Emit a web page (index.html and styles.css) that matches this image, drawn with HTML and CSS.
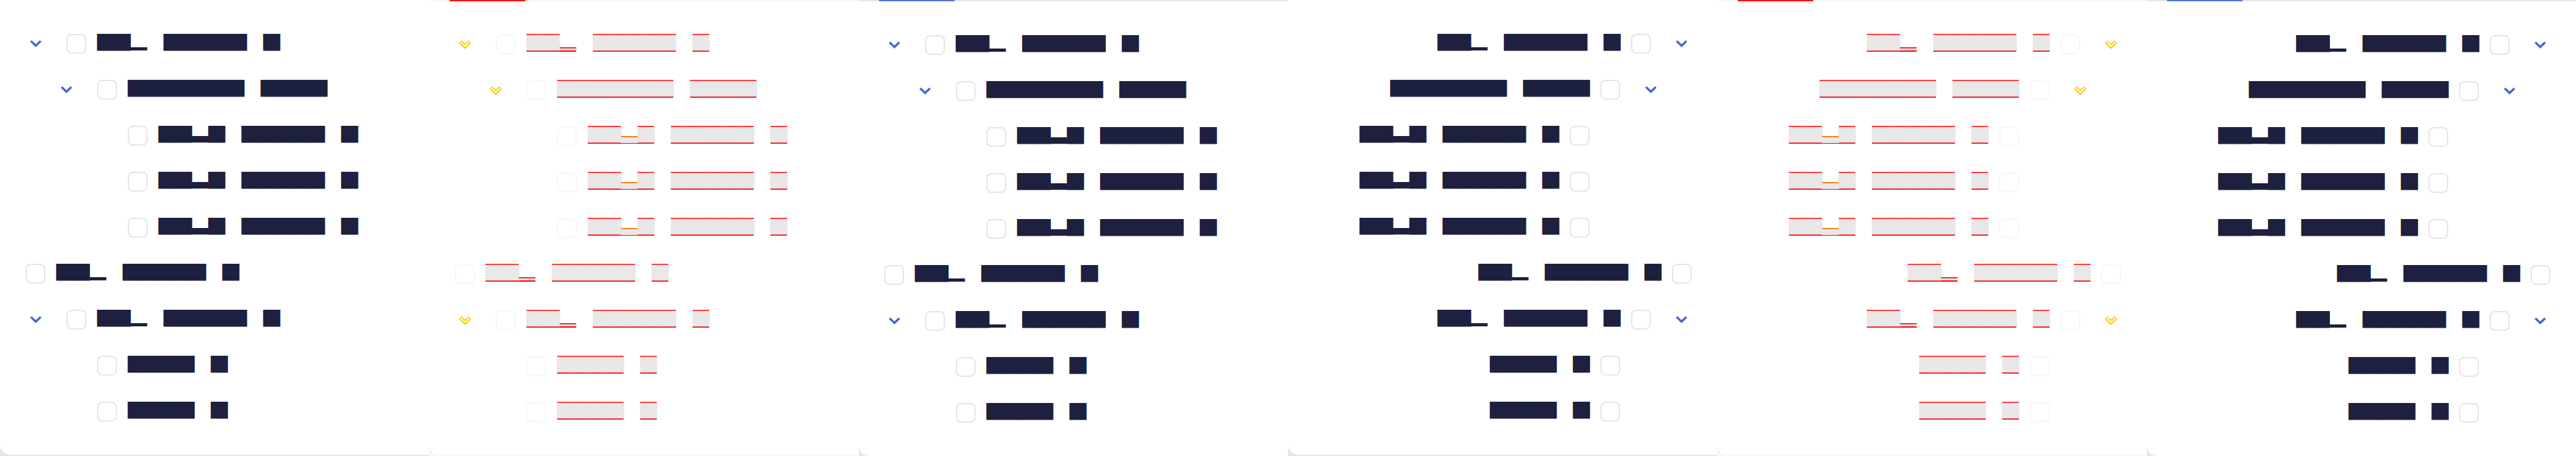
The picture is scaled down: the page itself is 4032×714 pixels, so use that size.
FILE: index.html
```html
<!DOCTYPE html>
<html>
<head>
    <title>Tree view snapshots</title>
    <link rel="stylesheet" href="styles.css">
</head>
<body>
    <svg class="defs" aria-hidden="true">
        <symbol id="chev" viewBox="0 0 20 12"><path d="M2.3 2.2 10 9.6 17.7 2.2" fill="none" stroke="currentColor" stroke-width="3.4"/></symbol>
        <symbol id="chevd" viewBox="0 0 20 14"><path d="M2.3 3.2 10 10.6 17.7 3.2" fill="none" stroke="#f00" stroke-width="5"/><path d="M2.3 3.2 10 10.6 17.7 3.2" fill="none" stroke="#ff0" stroke-width="4.3"/><path d="M2.3 3.2 10 10.6 17.7 3.2" fill="none" stroke="#fffce6" stroke-width="1.2"/></symbol>
    </svg>

    <div class="shots">

        <!-- expected, ltr -->
        <section class="shot expected">
            <div class="card">
                <ul class="tree">
                    <li class="row l0"><span class="twist"><svg class="chev"><use href="#chev"/></svg></span><span class="box"></span><span class="label"><span class="w"><span class="c">██</span><span class="c lo">█</span></span><span class="w"><span class="c">█████</span></span><span class="w"><span class="c">█</span></span></span></li>
                    <li class="row l1"><span class="twist"><svg class="chev"><use href="#chev"/></svg></span><span class="box"></span><span class="label"><span class="w"><span class="c">███████</span></span><span class="w"><span class="c">████</span></span></span></li>
                    <li class="row l2"><span class="twist"></span><span class="box"></span><span class="label"><span class="w"><span class="c">██</span><span class="c mid">█</span><span class="c">█</span></span><span class="w"><span class="c">█████</span></span><span class="w"><span class="c">█</span></span></span></li>
                    <li class="row l2"><span class="twist"></span><span class="box"></span><span class="label"><span class="w"><span class="c">██</span><span class="c mid">█</span><span class="c">█</span></span><span class="w"><span class="c">█████</span></span><span class="w"><span class="c">█</span></span></span></li>
                    <li class="row l2"><span class="twist"></span><span class="box"></span><span class="label"><span class="w"><span class="c">██</span><span class="c mid">█</span><span class="c">█</span></span><span class="w"><span class="c">█████</span></span><span class="w"><span class="c">█</span></span></span></li>
                    <li class="row l0"><span class="box"></span><span class="label"><span class="w"><span class="c">██</span><span class="c lo">█</span></span><span class="w"><span class="c">█████</span></span><span class="w"><span class="c">█</span></span></span></li>
                    <li class="row l0"><span class="twist"><svg class="chev"><use href="#chev"/></svg></span><span class="box"></span><span class="label"><span class="w"><span class="c">██</span><span class="c lo">█</span></span><span class="w"><span class="c">█████</span></span><span class="w"><span class="c">█</span></span></span></li>
                    <li class="row l1"><span class="twist"></span><span class="box"></span><span class="label"><span class="w"><span class="c">████</span></span><span class="w"><span class="c">█</span></span></span></li>
                    <li class="row l1"><span class="twist"></span><span class="box"></span><span class="label"><span class="w"><span class="c">████</span></span><span class="w"><span class="c">█</span></span></span></li>
                </ul>
            </div>
        </section>

        <!-- diff, ltr -->
        <section class="shot diff">
            <div class="card">
                <div class="tabline"><i></i></div>
                <ul class="tree">
                    <li class="row l0"><span class="twist"><svg class="chev"><use href="#chevd"/></svg></span><span class="box"></span><span class="label"><span class="w"><span class="c">██</span><span class="c lo">█</span></span><span class="w"><span class="c">█████</span></span><span class="w"><span class="c">█</span></span></span></li>
                    <li class="row l1"><span class="twist"><svg class="chev"><use href="#chevd"/></svg></span><span class="box"></span><span class="label"><span class="w"><span class="c">███████</span></span><span class="w"><span class="c">████</span></span></span></li>
                    <li class="row l2"><span class="twist"></span><span class="box"></span><span class="label"><span class="w"><span class="c">██</span><span class="c mid">█</span><span class="c">█</span></span><span class="w"><span class="c">█████</span></span><span class="w"><span class="c">█</span></span></span></li>
                    <li class="row l2"><span class="twist"></span><span class="box"></span><span class="label"><span class="w"><span class="c">██</span><span class="c mid">█</span><span class="c">█</span></span><span class="w"><span class="c">█████</span></span><span class="w"><span class="c">█</span></span></span></li>
                    <li class="row l2"><span class="twist"></span><span class="box"></span><span class="label"><span class="w"><span class="c">██</span><span class="c mid">█</span><span class="c">█</span></span><span class="w"><span class="c">█████</span></span><span class="w"><span class="c">█</span></span></span></li>
                    <li class="row l0"><span class="box"></span><span class="label"><span class="w"><span class="c">██</span><span class="c lo">█</span></span><span class="w"><span class="c">█████</span></span><span class="w"><span class="c">█</span></span></span></li>
                    <li class="row l0"><span class="twist"><svg class="chev"><use href="#chevd"/></svg></span><span class="box"></span><span class="label"><span class="w"><span class="c">██</span><span class="c lo">█</span></span><span class="w"><span class="c">█████</span></span><span class="w"><span class="c">█</span></span></span></li>
                    <li class="row l1"><span class="twist"></span><span class="box"></span><span class="label"><span class="w"><span class="c">████</span></span><span class="w"><span class="c">█</span></span></span></li>
                    <li class="row l1"><span class="twist"></span><span class="box"></span><span class="label"><span class="w"><span class="c">████</span></span><span class="w"><span class="c">█</span></span></span></li>
                </ul>
            </div>
        </section>

        <!-- actual, ltr -->
        <section class="shot actual">
            <div class="card">
                <div class="tabline"><i></i></div>
                <ul class="tree">
                    <li class="row l0"><span class="twist"><svg class="chev"><use href="#chev"/></svg></span><span class="box"></span><span class="label"><span class="w"><span class="c">██</span><span class="c lo">█</span></span><span class="w"><span class="c">█████</span></span><span class="w"><span class="c">█</span></span></span></li>
                    <li class="row l1"><span class="twist"><svg class="chev"><use href="#chev"/></svg></span><span class="box"></span><span class="label"><span class="w"><span class="c">███████</span></span><span class="w"><span class="c">████</span></span></span></li>
                    <li class="row l2"><span class="twist"></span><span class="box"></span><span class="label"><span class="w"><span class="c">██</span><span class="c mid">█</span><span class="c">█</span></span><span class="w"><span class="c">█████</span></span><span class="w"><span class="c">█</span></span></span></li>
                    <li class="row l2"><span class="twist"></span><span class="box"></span><span class="label"><span class="w"><span class="c">██</span><span class="c mid">█</span><span class="c">█</span></span><span class="w"><span class="c">█████</span></span><span class="w"><span class="c">█</span></span></span></li>
                    <li class="row l2"><span class="twist"></span><span class="box"></span><span class="label"><span class="w"><span class="c">██</span><span class="c mid">█</span><span class="c">█</span></span><span class="w"><span class="c">█████</span></span><span class="w"><span class="c">█</span></span></span></li>
                    <li class="row l0"><span class="box"></span><span class="label"><span class="w"><span class="c">██</span><span class="c lo">█</span></span><span class="w"><span class="c">█████</span></span><span class="w"><span class="c">█</span></span></span></li>
                    <li class="row l0"><span class="twist"><svg class="chev"><use href="#chev"/></svg></span><span class="box"></span><span class="label"><span class="w"><span class="c">██</span><span class="c lo">█</span></span><span class="w"><span class="c">█████</span></span><span class="w"><span class="c">█</span></span></span></li>
                    <li class="row l1"><span class="twist"></span><span class="box"></span><span class="label"><span class="w"><span class="c">████</span></span><span class="w"><span class="c">█</span></span></span></li>
                    <li class="row l1"><span class="twist"></span><span class="box"></span><span class="label"><span class="w"><span class="c">████</span></span><span class="w"><span class="c">█</span></span></span></li>
                </ul>
            </div>
        </section>

        <!-- expected, rtl -->
        <section class="shot expected rtl">
            <div class="card">
                <ul class="tree">
                    <li class="row l0"><span class="twist"><svg class="chev"><use href="#chev"/></svg></span><span class="box"></span><span class="label"><span class="w"><span class="c">██</span><span class="c lo">█</span></span><span class="w"><span class="c">█████</span></span><span class="w"><span class="c">█</span></span></span></li>
                    <li class="row l1"><span class="twist"><svg class="chev"><use href="#chev"/></svg></span><span class="box"></span><span class="label"><span class="w"><span class="c">███████</span></span><span class="w"><span class="c">████</span></span></span></li>
                    <li class="row l2"><span class="twist"></span><span class="box"></span><span class="label"><span class="w"><span class="c">██</span><span class="c mid">█</span><span class="c">█</span></span><span class="w"><span class="c">█████</span></span><span class="w"><span class="c">█</span></span></span></li>
                    <li class="row l2"><span class="twist"></span><span class="box"></span><span class="label"><span class="w"><span class="c">██</span><span class="c mid">█</span><span class="c">█</span></span><span class="w"><span class="c">█████</span></span><span class="w"><span class="c">█</span></span></span></li>
                    <li class="row l2"><span class="twist"></span><span class="box"></span><span class="label"><span class="w"><span class="c">██</span><span class="c mid">█</span><span class="c">█</span></span><span class="w"><span class="c">█████</span></span><span class="w"><span class="c">█</span></span></span></li>
                    <li class="row l0"><span class="box"></span><span class="label"><span class="w"><span class="c">██</span><span class="c lo">█</span></span><span class="w"><span class="c">█████</span></span><span class="w"><span class="c">█</span></span></span></li>
                    <li class="row l0"><span class="twist"><svg class="chev"><use href="#chev"/></svg></span><span class="box"></span><span class="label"><span class="w"><span class="c">██</span><span class="c lo">█</span></span><span class="w"><span class="c">█████</span></span><span class="w"><span class="c">█</span></span></span></li>
                    <li class="row l1"><span class="twist"></span><span class="box"></span><span class="label"><span class="w"><span class="c">████</span></span><span class="w"><span class="c">█</span></span></span></li>
                    <li class="row l1"><span class="twist"></span><span class="box"></span><span class="label"><span class="w"><span class="c">████</span></span><span class="w"><span class="c">█</span></span></span></li>
                </ul>
            </div>
        </section>

        <!-- diff, rtl -->
        <section class="shot diff rtl">
            <div class="card">
                <div class="tabline"><i></i></div>
                <ul class="tree">
                    <li class="row l0"><span class="twist"><svg class="chev"><use href="#chevd"/></svg></span><span class="box"></span><span class="label"><span class="w"><span class="c">██</span><span class="c lo">█</span></span><span class="w"><span class="c">█████</span></span><span class="w"><span class="c">█</span></span></span></li>
                    <li class="row l1"><span class="twist"><svg class="chev"><use href="#chevd"/></svg></span><span class="box"></span><span class="label"><span class="w"><span class="c">███████</span></span><span class="w"><span class="c">████</span></span></span></li>
                    <li class="row l2"><span class="twist"></span><span class="box"></span><span class="label"><span class="w"><span class="c">██</span><span class="c mid">█</span><span class="c">█</span></span><span class="w"><span class="c">█████</span></span><span class="w"><span class="c">█</span></span></span></li>
                    <li class="row l2"><span class="twist"></span><span class="box"></span><span class="label"><span class="w"><span class="c">██</span><span class="c mid">█</span><span class="c">█</span></span><span class="w"><span class="c">█████</span></span><span class="w"><span class="c">█</span></span></span></li>
                    <li class="row l2"><span class="twist"></span><span class="box"></span><span class="label"><span class="w"><span class="c">██</span><span class="c mid">█</span><span class="c">█</span></span><span class="w"><span class="c">█████</span></span><span class="w"><span class="c">█</span></span></span></li>
                    <li class="row l0"><span class="box"></span><span class="label"><span class="w"><span class="c">██</span><span class="c lo">█</span></span><span class="w"><span class="c">█████</span></span><span class="w"><span class="c">█</span></span></span></li>
                    <li class="row l0"><span class="twist"><svg class="chev"><use href="#chevd"/></svg></span><span class="box"></span><span class="label"><span class="w"><span class="c">██</span><span class="c lo">█</span></span><span class="w"><span class="c">█████</span></span><span class="w"><span class="c">█</span></span></span></li>
                    <li class="row l1"><span class="twist"></span><span class="box"></span><span class="label"><span class="w"><span class="c">████</span></span><span class="w"><span class="c">█</span></span></span></li>
                    <li class="row l1"><span class="twist"></span><span class="box"></span><span class="label"><span class="w"><span class="c">████</span></span><span class="w"><span class="c">█</span></span></span></li>
                </ul>
            </div>
        </section>

        <!-- actual, rtl -->
        <section class="shot actual rtl">
            <div class="card">
                <div class="tabline"><i></i></div>
                <ul class="tree">
                    <li class="row l0"><span class="twist"><svg class="chev"><use href="#chev"/></svg></span><span class="box"></span><span class="label"><span class="w"><span class="c">██</span><span class="c lo">█</span></span><span class="w"><span class="c">█████</span></span><span class="w"><span class="c">█</span></span></span></li>
                    <li class="row l1"><span class="twist"><svg class="chev"><use href="#chev"/></svg></span><span class="box"></span><span class="label"><span class="w"><span class="c">███████</span></span><span class="w"><span class="c">████</span></span></span></li>
                    <li class="row l2"><span class="twist"></span><span class="box"></span><span class="label"><span class="w"><span class="c">██</span><span class="c mid">█</span><span class="c">█</span></span><span class="w"><span class="c">█████</span></span><span class="w"><span class="c">█</span></span></span></li>
                    <li class="row l2"><span class="twist"></span><span class="box"></span><span class="label"><span class="w"><span class="c">██</span><span class="c mid">█</span><span class="c">█</span></span><span class="w"><span class="c">█████</span></span><span class="w"><span class="c">█</span></span></span></li>
                    <li class="row l2"><span class="twist"></span><span class="box"></span><span class="label"><span class="w"><span class="c">██</span><span class="c mid">█</span><span class="c">█</span></span><span class="w"><span class="c">█████</span></span><span class="w"><span class="c">█</span></span></span></li>
                    <li class="row l0"><span class="box"></span><span class="label"><span class="w"><span class="c">██</span><span class="c lo">█</span></span><span class="w"><span class="c">█████</span></span><span class="w"><span class="c">█</span></span></span></li>
                    <li class="row l0"><span class="twist"><svg class="chev"><use href="#chev"/></svg></span><span class="box"></span><span class="label"><span class="w"><span class="c">██</span><span class="c lo">█</span></span><span class="w"><span class="c">█████</span></span><span class="w"><span class="c">█</span></span></span></li>
                    <li class="row l1"><span class="twist"></span><span class="box"></span><span class="label"><span class="w"><span class="c">████</span></span><span class="w"><span class="c">█</span></span></span></li>
                    <li class="row l1"><span class="twist"></span><span class="box"></span><span class="label"><span class="w"><span class="c">████</span></span><span class="w"><span class="c">█</span></span></span></li>
                </ul>
            </div>
        </section>

    </div>
</body>
</html>
```

FILE: styles.css
```css
body {
    margin: 0;
    background-color: white;
}
.defs {
    display: none;
}
.shots {
    display: flex;
    width: 4032px;
    height: 714px;
    overflow: hidden;
}
.shot {
    flex: none;
    width: 672px;
    height: 714px;
    overflow: hidden;
    background-color: #e6e6e6;
}
.card {
    box-sizing: border-box;
    height: 712px;
    background-color: white;
    border-bottom-left-radius: 16px;
}
.actual .card {
    height: 714px;
}

/* tab underline above the tree */
.tabline {
    height: 2px;
    background-color: #e6e6e6;
}
.tabline i {
    display: block;
    width: 118px;
    height: 2px;
    margin-left: 32px;
    background-color: #5470d1;
}

/* tree */
.tree {
    list-style: none;
    margin: 0;
    padding: 30px 0 0;
}
.rtl .tree {
    direction: rtl;
}
.row {
    display: flex;
    align-items: center;
    height: 72px;
    padding-inline-start: 40px;
}
.row.l1 {
    padding-inline-start: 88px;
}
.row.l2 {
    padding-inline-start: 136px;
}
.twist {
    flex: none;
    display: flex;
    justify-content: center;
    width: 32px;
    margin-inline-end: 32px;
}
.chev {
    display: block;
    width: 20px;
    height: 12px;
    margin-top: 4px;
    overflow: visible;
    color: #4b67cc;
}
.box {
    flex: none;
    box-sizing: border-box;
    width: 31px;
    height: 31px;
    margin-top: 4px;
    margin-inline-end: 17px;
    border: 2px solid #e5e5e5;
    border-radius: 8px;
}

/* labels: block glyphs, one cell per character, squashed to a 26px square */
.label {
    display: flex;
    align-items: flex-end;
    gap: 26px;
    height: 26px;
    direction: ltr;
    font-family: "DejaVu Sans Mono", monospace;
    font-size: 43.19px;
    line-height: 50px;
    color: #1d203e;
}
.w {
    display: flex;
    align-items: flex-end;
}
.c {
    display: block;
    transform-origin: 50% 100%;
    transform: scaleY(0.5171);
}
.c.lo {
    transform: scaleY(0.0994);
}
.c.mid {
    transform: scaleY(0.1989);
}

/* diff view: unchanged pixels washed out, changed ones red */
.shot.diff {
    background-color: #f7f7f7;
}
.diff .tabline {
    background-color: #f6f6f6;
}
.diff .tabline i {
    background-color: #ff0000;
}
.diff .tree {
    padding-top: 29px;
}
.diff .chev {
    height: 14px;
}
.diff .box {
    border-color: #f6f6f6;
}
.diff .label {
    height: 28px;
    color: #e8e8e8;
}
.diff .w {
    border-bottom: 2px solid #ff0000;
}
.diff .c {
    transform: scaleY(0.4773);
    border-top: 4.19px solid #ff0000;
}
.diff .c.lo {
    transform: scaleY(0.05967);
    border-top-width: 33.52px;
}
.diff .c.mid {
    transform: scaleY(0.1591);
    border-top-width: 6.29px;
    padding-top: 6.29px;
    background-color: #ffff00;
}
```
